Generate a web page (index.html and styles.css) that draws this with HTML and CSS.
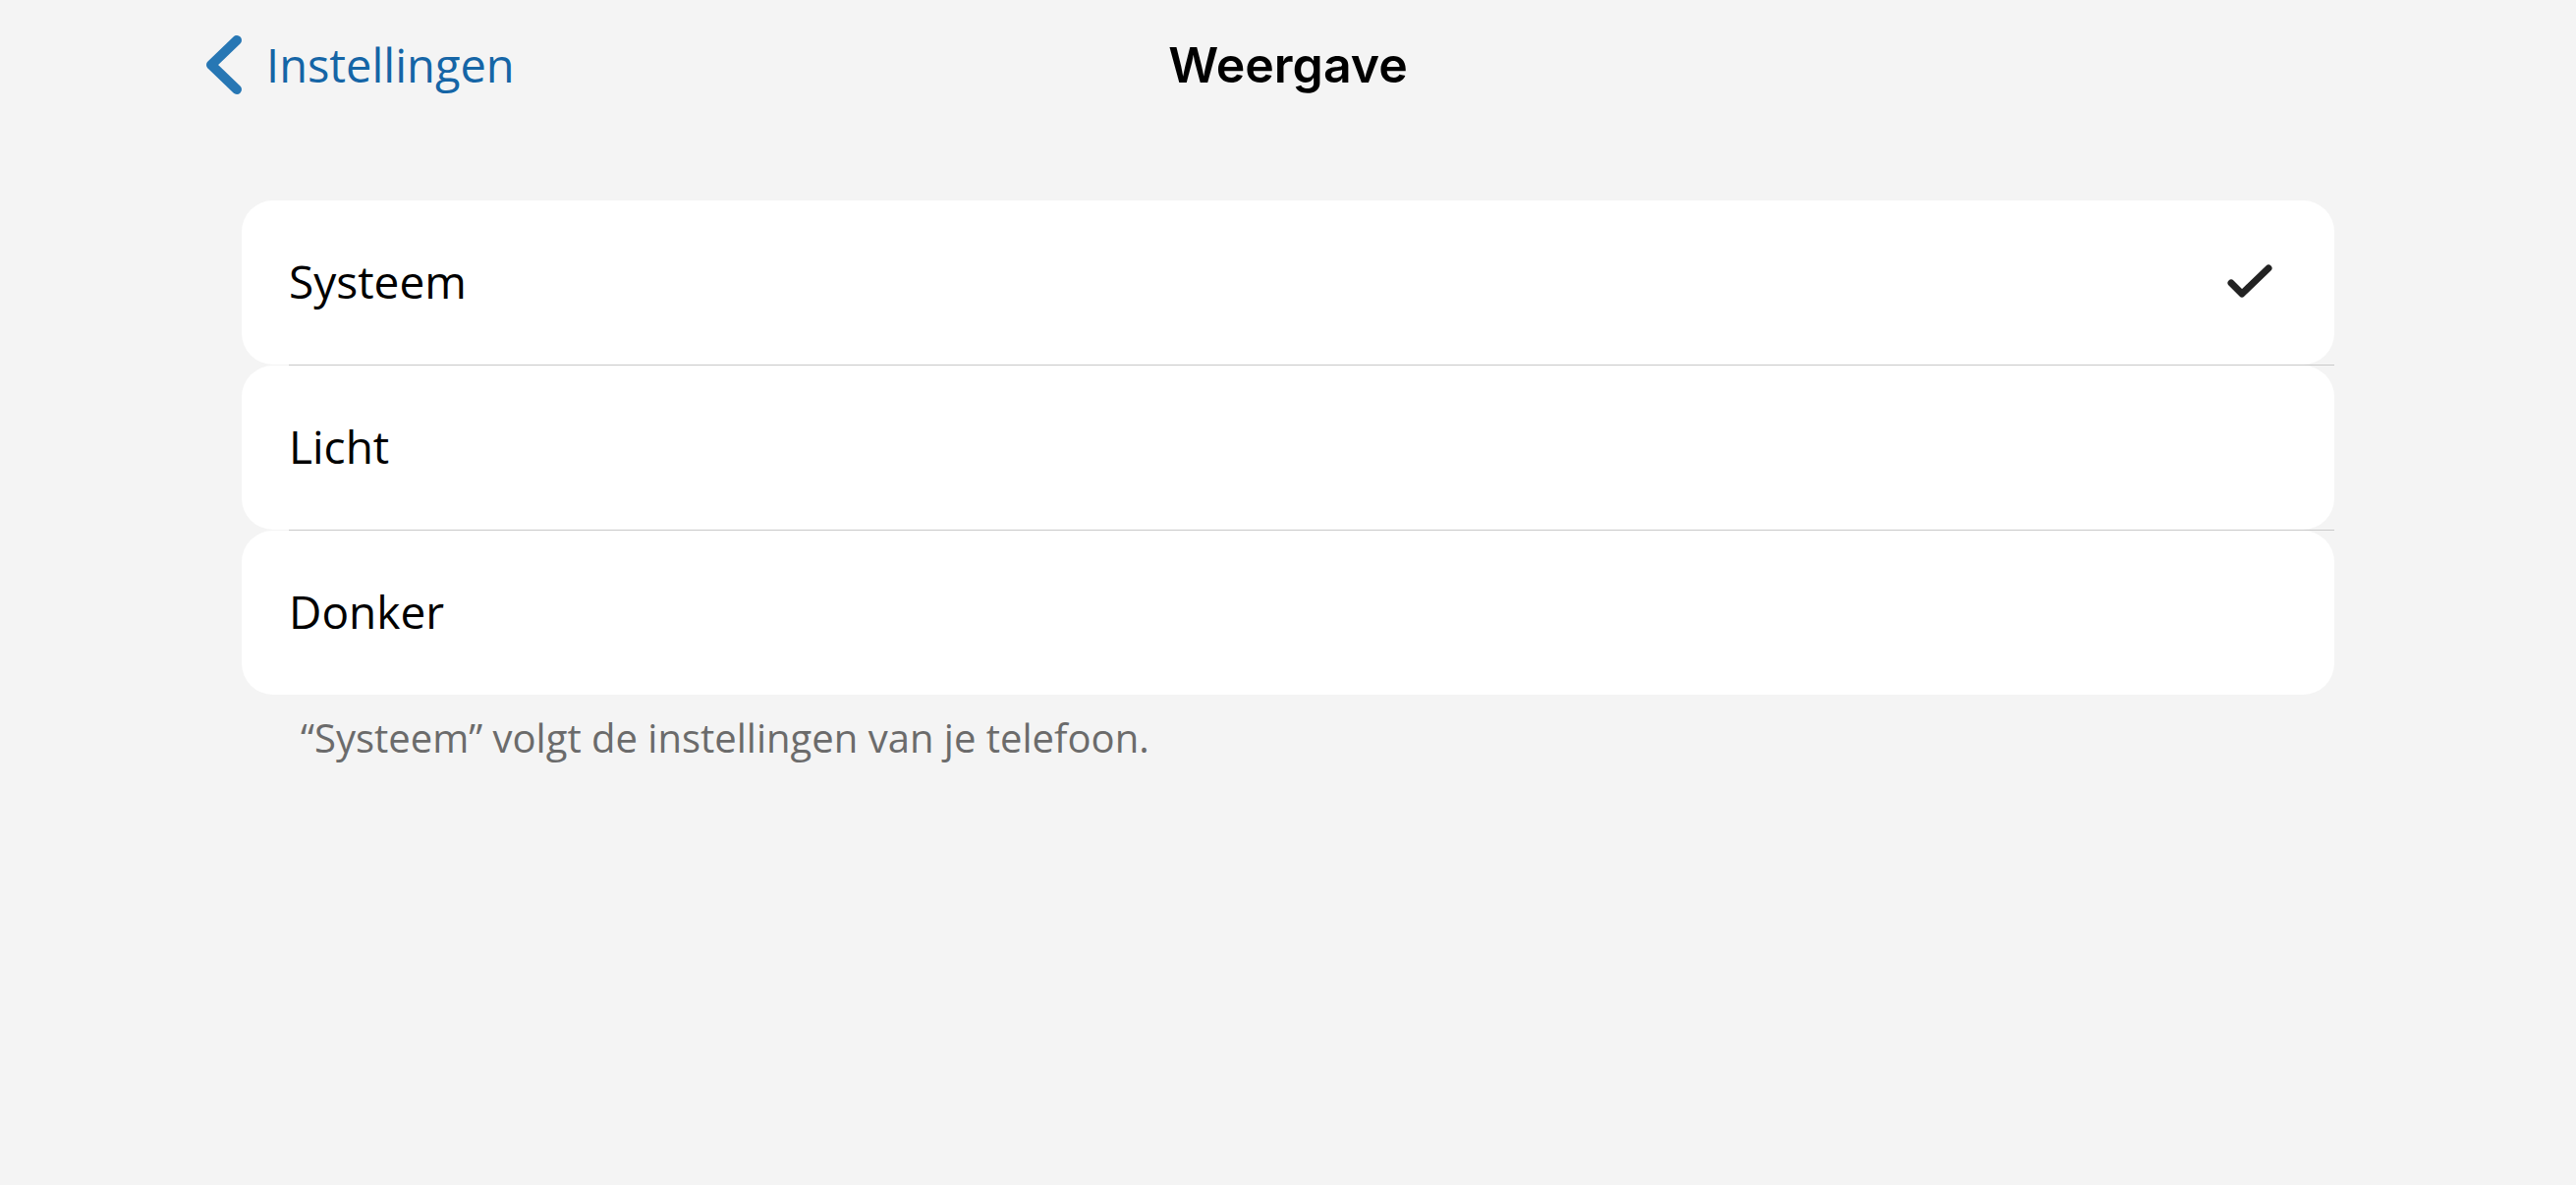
FILE: index.html
```html
<!DOCTYPE html>
<html lang="nl">
<head>
<meta charset="utf-8">
<title>Weergave</title>
<link rel="stylesheet" href="styles.css">
</head>
<body>
<header class="nav">
  <a class="back" href="#">
    <svg class="chevron" width="36" height="60" viewBox="0 0 36 60" aria-hidden="true">
      <polyline points="31,5 5,30 31,55" fill="none" stroke="#2777b4" stroke-width="10" stroke-linecap="round" stroke-linejoin="round"/>
    </svg>
    <span class="back-label">Instellingen</span>
  </a>
  <h1 class="title">Weergave</h1>
  <div class="spacer"></div>
</header>
<main class="content">
  <ul class="options">
    <li class="option">
      <span class="option-label">Systeem</span>
      <svg class="check" width="48" height="40" viewBox="0 0 48 40" aria-hidden="true">
        <polyline points="5,20 16,31 43,5" fill="none" stroke="#222222" stroke-width="7" stroke-linecap="round" stroke-linejoin="round"/>
      </svg>
    </li>
    <li class="sep"></li>
    <li class="option"><span class="option-label">Licht</span></li>
    <li class="sep"></li>
    <li class="option"><span class="option-label">Donker</span></li>
  </ul>
  <p class="footnote">“Systeem” volgt de instellingen van je telefoon.</p>
</main>
</body>
</html>
```
FILE: styles.css
```css
html, body {
  margin: 0;
  padding: 0;
}
body {
  background: #f4f4f4;
  font-family: "Open Sans", "Noto Sans", sans-serif;
  width: 2622px;
  height: 1206px;
  overflow: hidden;
}
.nav {
  height: 132px;
  display: grid;
  grid-template-columns: 1fr auto 1fr;
  align-items: center;
  padding: 0 210px;
  box-sizing: border-box;
}
.back {
  display: flex;
  align-items: center;
  gap: 25px;
  text-decoration: none;
  color: #1565a6;
  justify-self: start;
}
.chevron {
  display: block;
  flex: none;
}
.back-label {
  font-size: 47px;
  line-height: 1;
}
.title {
  margin: 0;
  font-family: Inter, "Liberation Sans", sans-serif;
  font-weight: 600;
  font-size: 50px;
  color: #000;
  line-height: 1;
}
.content {
  padding: 72px 246px 0 246px;
}
.options {
  list-style: none;
  margin: 0;
  padding: 0;
}
.option {
  height: 167px;
  background: #fff;
  border-radius: 32px;
  display: flex;
  align-items: center;
  justify-content: space-between;
  padding: 0 62px 0 48px;
}
.option-label {
  font-size: 46px;
  color: #000;
  line-height: 1;
  padding-bottom: 3px;
}
.check {
  display: block;
}
.sep {
  height: 1px;
  background: #c8c8c8;
  margin-left: 48px;
}
.footnote {
  margin: 16px 0 0 60px;
  font-size: 40px;
  color: #6b6b6b;
}
```
